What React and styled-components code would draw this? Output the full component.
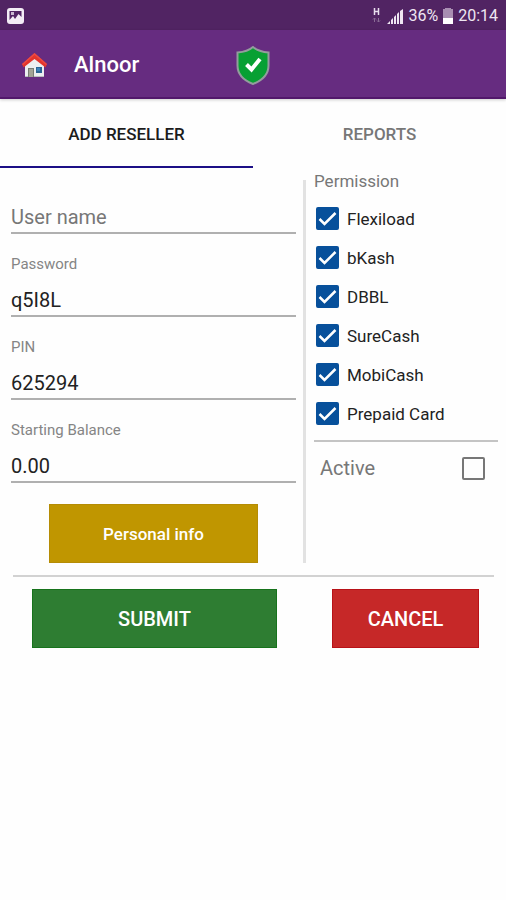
import styled, { createGlobalStyle } from 'styled-components';

const GlobalStyle = createGlobalStyle`
  * {
    box-sizing: border-box;
  }

  body {
    margin: 0;
    background: #fefefe;
    font-family: Roboto, "Liberation Sans", sans-serif;
    color: #222;
  }

  button,
  input {
    font-family: inherit;
  }
`;

const StatusBar = styled.div`
  height: 30px;
  padding: 2px 8px 0 7px;
  display: flex;
  align-items: center;
  justify-content: space-between;
  background: #512463;
  color: #eee6f2;
`;

const StatusGroup = styled.div`
  display: flex;
  align-items: center;
  gap: 5px;
  font-size: 16px;
  line-height: 20px;
`;

const AppBar = styled.header`
  height: 69px;
  padding: 3px 22px 0;
  display: grid;
  grid-template-columns: 1fr 34px 1fr;
  align-items: center;
  background: #662c80;
  border-bottom: 2px solid #52186b;
  box-shadow: 0 1px 3px rgba(0, 0, 0, 0.2);
`;

const Brand = styled.div`
  display: flex;
  align-items: center;
  gap: 27px;
`;

const IconButton = styled.button`
  display: flex;
  padding: 0;
  border: 0;
  background: none;
  cursor: pointer;
`;

const AppTitle = styled.h1`
  margin: 0;
  font-size: 22px;
  font-weight: 500;
  line-height: 28px;
  color: #fff;
`;

const Tabs = styled.nav`
  display: grid;
  grid-template-columns: 1fr 1fr;
`;

const Tab = styled.button`
  height: 69px;
  padding: 2px 0 0;
  border: 0;
  border-bottom: 2px solid ${props => (props.$active ? '#1c0f86' : 'transparent')};
  background: none;
  font-size: 17px;
  font-weight: 500;
  line-height: 20px;
  color: ${props => (props.$active ? '#1c1c1c' : '#777')};
  cursor: pointer;
`;

const Columns = styled.div`
  display: grid;
  grid-template-columns: minmax(0, 303fr) 3px minmax(0, 200fr);
`;

const Fields = styled.div`
  padding: 0 7px 0 11px;
`;

const Field = styled.div`
  padding-top: 22px;
  display: flex;
  flex-direction: column;
`;

const FieldLabel = styled.label`
  padding-bottom: 1px;
  font-size: 15px;
  line-height: 16px;
  color: #858585;
`;

const FieldInput = styled.input`
  width: 100%;
  height: 44px;
  padding: 15px 0 3px;
  border: 0;
  border-bottom: 2px solid #b0b0b0;
  border-radius: 0;
  outline: 0;
  background: none;
  font-size: 20px;
  line-height: 24px;
  color: #222;

  &::placeholder {
    color: #777;
    opacity: 1;
  }
`;

const Divider = styled.div`
  margin-top: 12px;
  background: #e2e2e2;
`;

const Permissions = styled.fieldset`
  min-width: 0;
  margin: 0;
  padding: 2px 8px 0;
  border: 0;
`;

const Legend = styled.legend`
  padding: 2px 0 5px;
  font-size: 17px;
  line-height: 22px;
  color: #777;
`;

const Option = styled.label`
  height: 39px;
  padding-left: 2px;
  display: flex;
  align-items: center;
  gap: 8px;
  font-size: 17px;
  line-height: 22px;
  cursor: pointer;
`;

const ActiveOption = styled(Option)`
  height: 54px;
  margin-top: 7px;
  padding: 0 13px 0 6px;
  justify-content: space-between;
  border-top: 2px solid #c4c4c4;
  font-size: 20px;
  line-height: 24px;
  color: #777;
`;

const Box = styled.span`
  display: grid;

  > * {
    grid-area: 1 / 1;
  }

  svg {
    visibility: hidden;
    pointer-events: none;
  }

  input:checked + svg {
    visibility: visible;
  }
`;

const BoxInput = styled.input`
  appearance: none;
  width: 23px;
  height: 23px;
  margin: 0;
  border: 2px solid #777;
  border-radius: 2px;
  cursor: pointer;

  &:checked {
    border-color: #07509b;
    background: #07509b;
  }
`;

const Button = styled.button`
  height: 59px;
  padding: 0;
  border: 1px solid ${props => props.$edge};
  background: ${props => props.$color};
  font-size: 20px;
  font-weight: 500;
  line-height: 24px;
  color: #fff;
  cursor: pointer;
`;

const InfoButton = styled(Button)`
  display: block;
  width: calc(100% - 76px);
  margin: 21px auto 0;
  font-size: 17px;
`;

const Actions = styled.div`
  margin: 12px 12px 0 13px;
  padding: 12px 15px 0 19px;
  display: grid;
  grid-template-columns: 5fr 3fr;
  gap: 55px;
  border-top: 2px solid #d2d2d2;
`;

const PictureIcon = () => (
  <svg width="17" height="17" viewBox="0 0 17 17" aria-hidden="true">
    <rect width="17" height="16" rx="3" fill="#f3edf5" />
    <path d="M2.500 3h12v6l-3-3-3.500 5-2-3-3.500 4z" fill="#512463" />
    <path d="M4 4h3v3H4z" fill="#c9b8d0" />
  </svg>
);

const NetworkIcon = () => (
  <svg width="10" height="17" viewBox="0 0 10 17" aria-hidden="true">
    <path d="M2.500 0v7M6.500 0v7M2.500 3.500h4" stroke="#e9deee" strokeWidth="1.500" fill="none" />
    <path d="M2.500 10v4M1 11.500L2.500 10 4 11.500M6.500 10v4M5 12.500L6.500 14 8 12.500" stroke="#896b95" fill="none" />
  </svg>
);

const SignalIcon = () => (
  <svg width="16" height="15" viewBox="0 0 16 15" aria-hidden="true">
    <path d="M0 15l3-3v3zM4 15v-4l2-2v6zM7 15V8l2-2v9zM10 15V5l2-2v12zM13 15V2l3-2v15z" fill="#eee6f2" />
  </svg>
);

const BatteryIcon = () => (
  <svg width="10" height="16" viewBox="0 0 10 16" aria-hidden="true">
    <path d="M2 0h6v1h2v15H0V1h2z" fill="#a88eb2" />
    <path d="M0 10h10v6H0z" fill="#fff" />
  </svg>
);

const HouseIcon = () => (
  <svg width="25" height="25" viewBox="0 0 25 25" aria-hidden="true">
    <path d="M3 12L12.500 4 22 12v12H3z" fill="#eceff0" />
    <path d="M3 23h19v1H3z" fill="#b9bfc0" />
    <path d="M6 15h6v9H6z" fill="#777c72" />
    <path d="M7 16h4v8H7z" fill="#a3a496" />
    <path d="M14 14h6v6h-6z" fill="#2a6595" />
    <path d="M15 15h3v3h-3z" fill="#3b82b8" />
    <path d="M12.500 0L25 11l-1.500 3.500L12.500 6 1.500 14.500 0 11z" fill="#e3352c" />
    <path d="M12.500 0L25 11l-1 1L12.500 2 1 12l-1-1z" fill="#ec4a42" />
  </svg>
);

const ShieldIcon = () => (
  <svg width="34" height="39" viewBox="0 0 34 39" aria-hidden="true">
    <path
      d="M17 1c4 3.500 9 5 15.500 5.500v13C32.500 28 26 34.500 17 38 8 34.500 1.500 28 1.500 19.500v-13C8 6 13 4.500 17 1z"
      fill="#07a033"
      stroke="#939d9d"
      strokeWidth="2"
    />
    <path d="M10.500 18.500l5 5 8.500-10.500" fill="none" stroke="#fff" strokeWidth="4" />
  </svg>
);

const Checkbox = ({ id, defaultChecked }) => (
  <Box>
    <BoxInput id={id} type="checkbox" defaultChecked={defaultChecked} />
    <svg width="23" height="23" viewBox="0 0 23 23" aria-hidden="true">
      <path d="M3.500 12l5 5L19.500 6" fill="none" stroke="#fff" strokeWidth="2.500" />
    </svg>
  </Box>
);

const fields = [
  { id: 'password', label: 'Password', value: 'q5I8L' },
  { id: 'pin', label: 'PIN', value: '625294' },
  { id: 'balance', label: 'Starting Balance', value: '0.00' },
];

const permissions = [
  { id: 'flexiload', label: 'Flexiload' },
  { id: 'bkash', label: 'bKash' },
  { id: 'dbbl', label: 'DBBL' },
  { id: 'surecash', label: 'SureCash' },
  { id: 'mobicash', label: 'MobiCash' },
  { id: 'prepaid', label: 'Prepaid Card' },
];

const App = () => {
  return (
    <>
      <GlobalStyle />
      <StatusBar>
        <PictureIcon />
        <StatusGroup>
          <NetworkIcon />
          <SignalIcon />
          <span>36%</span>
          <BatteryIcon />
          <span>20:14</span>
        </StatusGroup>
      </StatusBar>
      <AppBar>
        <Brand>
          <IconButton type="button" aria-label="Home"><HouseIcon /></IconButton>
          <AppTitle>Alnoor</AppTitle>
        </Brand>
        <ShieldIcon />
      </AppBar>
      <Tabs>
        <Tab type="button" $active>ADD RESELLER</Tab>
        <Tab type="button">REPORTS</Tab>
      </Tabs>
      <form onSubmit={e => e.preventDefault()}>
        <Columns>
          <Fields>
            <Field>
              <FieldInput id="username" aria-label="User name" placeholder="User name" />
            </Field>
            {fields.map(field => (
              <Field key={field.id}>
                <FieldLabel htmlFor={field.id}>{field.label}</FieldLabel>
                <FieldInput id={field.id} defaultValue={field.value} />
              </Field>
            ))}
            <InfoButton type="button" $color="#c09600" $edge="#b58c05">Personal info</InfoButton>
          </Fields>
          <Divider />
          <Permissions>
            <Legend>Permission</Legend>
            {permissions.map(item => (
              <Option key={item.id} htmlFor={item.id}>
                <Checkbox id={item.id} defaultChecked />
                {item.label}
              </Option>
            ))}
            <ActiveOption htmlFor="active">
              Active
              <Checkbox id="active" />
            </ActiveOption>
          </Permissions>
        </Columns>
        <Actions>
          <Button type="submit" $color="#2e7d32" $edge="#17731c">SUBMIT</Button>
          <Button type="button" $color="#c62828" $edge="#b81218">CANCEL</Button>
        </Actions>
      </form>
    </>
  );
};

export default App;
